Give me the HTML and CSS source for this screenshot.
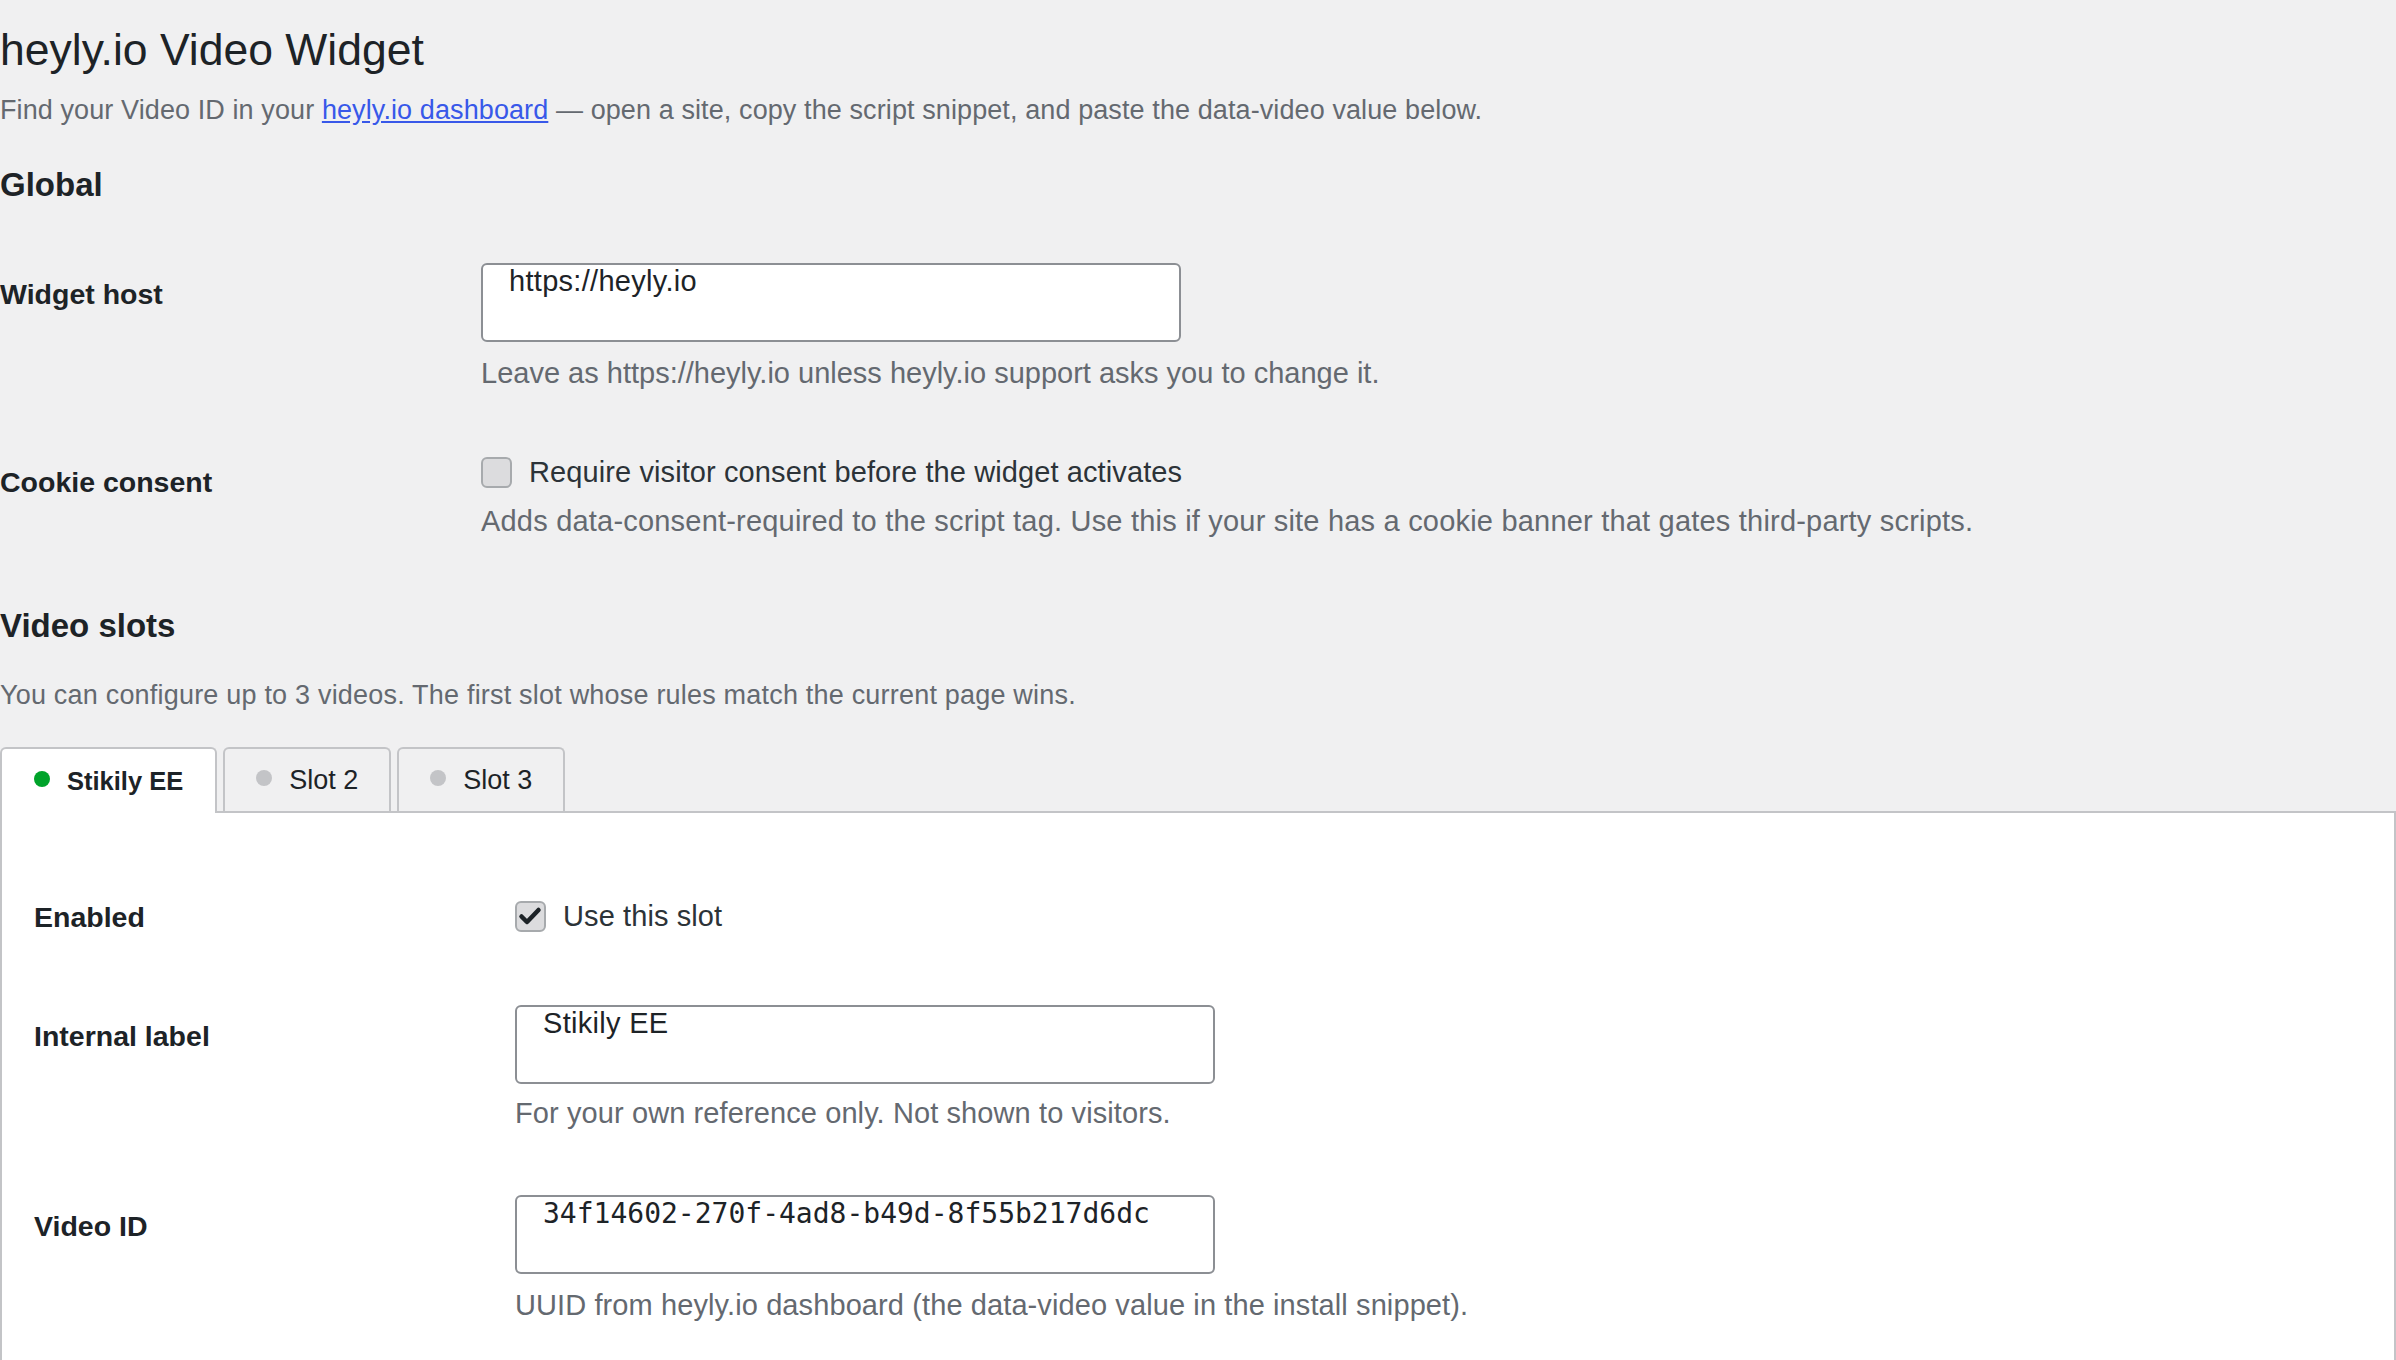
FILE: index.html
```html
<!DOCTYPE html>
<html>
<head>
  <meta charset="utf-8">
  <meta name="viewport" content="width=device-width, initial-scale=1.0">
  <title>heyly.io Video Widget</title>
  <link rel="stylesheet" href="styles.css">
</head>
<body>
  <div class="wrap">
    <h1 class="page-title">heyly.io Video Widget</h1>
    <p class="intro">Find your Video ID in your <a href="#">heyly.io dashboard</a> — open a site, copy the script snippet, and paste the data-video value below.</p>

    <h2 class="section-title">Global</h2>

    <div class="settings-row row-host">
      <div class="row-label label-input">Widget host</div>
      <div class="row-field">
        <input type="text" class="text-input" value="https://heyly.io">
        <p class="description">Leave as https://heyly.io unless heyly.io support asks you to change it.</p>
      </div>
    </div>

    <div class="settings-row row-consent">
      <div class="row-label label-check">Cookie consent</div>
      <div class="row-field">
        <label class="check-line">
          <span class="check-box"></span>
          Require visitor consent before the widget activates
        </label>
        <p class="description desc-check">Adds data-consent-required to the script tag. Use this if your site has a cookie banner that gates third-party scripts.</p>
      </div>
    </div>

    <h2 class="section-title slots-title">Video slots</h2>
    <p class="intro slots-note">You can configure up to 3 videos. The first slot whose rules match the current page wins.</p>

    <div class="tabs">
      <div class="tab active"><span class="dot on"></span>Stikily EE</div>
      <div class="tab"><span class="dot"></span>Slot 2</div>
      <div class="tab"><span class="dot"></span>Slot 3</div>
    </div>

    <div class="tab-panel">
      <div class="settings-row row-enabled">
        <div class="row-label">Enabled</div>
        <div class="row-field">
          <label class="check-line">
            <span class="check-box checked">
              <svg viewBox="0 0 27 27" width="27" height="27"><path d="M4.5 13.5 L10 19 L21.5 7" fill="none" stroke="#1d2327" stroke-width="4.5" stroke-linecap="round" stroke-linejoin="round"/></svg>
            </span>
            Use this slot
          </label>
        </div>
      </div>

      <div class="settings-row row-label-field">
        <div class="row-label label-input">Internal label</div>
        <div class="row-field">
          <input type="text" class="text-input" value="Stikily EE">
          <p class="description desc-check">For your own reference only. Not shown to visitors.</p>
        </div>
      </div>

      <div class="settings-row row-video">
        <div class="row-label label-input">Video ID</div>
        <div class="row-field">
          <input type="text" class="text-input mono" value="34f14602-270f-4ad8-b49d-8f55b217d6dc">
          <p class="description">UUID from heyly.io dashboard (the data-video value in the install snippet).</p>
        </div>
      </div>
    </div>
  </div>
</body>
</html>
```

FILE: styles.css
```css
*, *::before, *::after {
  box-sizing: border-box;
  margin: 0;
  padding: 0;
}

body {
  font-family: "Liberation Sans", Arial, sans-serif;
  background-color: #f0f0f1;
  color: #1d2327;
  overflow: hidden;
}

.page-title {
  font-size: 44.5px;
  font-weight: 400;
  line-height: 60px;
  margin-top: 20px;
}

.intro {
  font-size: 27px;
  letter-spacing: 0.1px;
  line-height: 40px;
  margin-top: 10px;
  color: #646970;
}

.intro a {
  color: #3858e9;
}

.section-title {
  font-size: 33px;
  font-weight: 700;
  line-height: 44px;
  margin-top: 33px;
}

.slots-title {
  margin-top: 63px;
}

.slots-note {
  margin-top: 27px;
  letter-spacing: 0.2px;
}

/* form rows */
.settings-row {
  display: flex;
}

.row-label {
  width: 481px;
  flex-shrink: 0;
  font-size: 28.5px;
  font-weight: 700;
  line-height: 40px;
  padding-top: 1px;
}

.label-input {
  padding-top: 11px;
}

.label-check {
  padding-top: 10px;
}

.row-field {
  flex: 1;
}

.row-host {
  margin-top: 56px;
}

.row-consent {
  margin-top: 59px;
}

.text-input {
  display: block;
  width: 700px;
  height: 79px;
  padding: 0 24px 42px 26px;
  border: 2px solid #8c8f94;
  border-radius: 6px;
  background: #fff;
  font-family: "Liberation Sans", Arial, sans-serif;
  font-size: 29px;
  letter-spacing: 0.3px;
  color: #1d2327;
  outline: none;
}

.text-input.mono {
  font-family: "DejaVu Sans Mono", "Liberation Mono", monospace;
  font-size: 28px;
  letter-spacing: 0;
}

.description {
  font-size: 29px;
  letter-spacing: 0.1px;
  line-height: 40px;
  margin-top: 11px;
  color: #646970;
}

.desc-check {
  margin-top: 9px;
}

.row-consent .description {
  letter-spacing: 0.2px;
}

.row-host .description {
  letter-spacing: 0;
}

.check-line {
  display: flex;
  align-items: center;
  gap: 17px;
  font-size: 29px;
  letter-spacing: 0.1px;
  line-height: 40px;
  color: #2c3338;
}

.check-box {
  width: 31px;
  height: 31px;
  flex-shrink: 0;
  display: flex;
  align-items: center;
  justify-content: center;
  border: 2px solid #a7aaad;
  border-radius: 6px;
  background: #dcdcde;
}

/* tabs */
.tabs {
  display: flex;
  align-items: flex-start;
  gap: 6px;
  margin-top: 32px;
  margin-bottom: -2px;
}

.tab {
  position: relative;
  display: flex;
  align-items: center;
  gap: 17px;
  height: 64px;
  padding: 0 31px;
  border: 2px solid #c3c4c7;
  border-bottom: none;
  border-radius: 6px 6px 0 0;
  background: #f0f0f1;
  font-size: 27px;
  color: #1d2327;
}

.tab.active {
  height: 66px;
  padding: 0 32px;
  background: #fff;
  font-size: 25.5px;
  font-weight: 700;
}

.dot {
  width: 16px;
  height: 16px;
  border-radius: 50%;
  background: #c3c4c7;
  margin-top: -5px;
}

.dot.on {
  background: #00a32a;
}

.tab-panel {
  background: #fff;
  border: 2px solid #c3c4c7;
  padding: 0 32px 80px;
}

.row-enabled {
  margin-top: 83px;
}

.row-enabled .row-label {
  padding-top: 1px;
}

.row-label-field {
  margin-top: 68px;
}

.row-label-field .label-input {
  padding-top: 11px;
}

.row-video {
  margin-top: 62px;
}
```
